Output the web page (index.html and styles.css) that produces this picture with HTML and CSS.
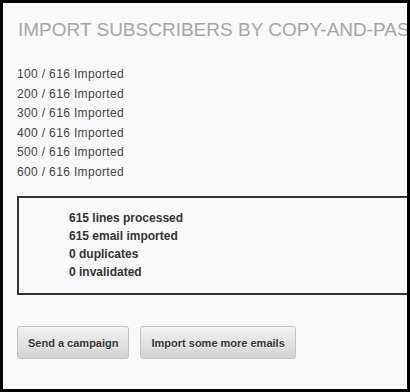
FILE: index.html
```html
<!DOCTYPE html>
<html lang="en">
<head>
    <meta charset="UTF-8">
    <title>Import subscribers</title>
    <link rel="stylesheet" href="styles.css">
</head>
<body>
    <div class="page">
        <h1>Import subscribers by copy-and-paste</h1>

        <div class="progress">
            <div>100 / 616 Imported</div>
            <div>200 / 616 Imported</div>
            <div>300 / 616 Imported</div>
            <div>400 / 616 Imported</div>
            <div>500 / 616 Imported</div>
            <div>600 / 616 Imported</div>
        </div>

        <div class="summary">
            <div>615 lines processed</div>
            <div>615 email imported</div>
            <div>0 duplicates</div>
            <div>0 invalidated</div>
        </div>

        <div class="actions">
            <button class="button">Send a campaign</button>
            <button class="button">Import some more emails</button>
        </div>
    </div>
</body>
</html>
```

FILE: styles.css
```css
html, body {
    margin: 0;
    background: #000;
}
body {
    padding: 3px;
    font-family: "Liberation Sans", Arial, sans-serif;
}
.page {
    width: 390px;
    height: 370px;
    padding: 16px 0 0 14px;
    background: #f9f9f9;
    overflow: hidden;
}
h1 {
    margin: 0 0 24px 1px;
    font-size: 19px;
    line-height: 22px;
    font-weight: normal;
    text-transform: uppercase;
    white-space: nowrap;
    color: #a6a6a6;
}
.progress {
    font-size: 12px;
    line-height: 19.5px;
    letter-spacing: 0.35px;
    color: #444;
}
.summary {
    width: 420px;
    margin-top: 14px;
    padding: 11px 0 12px 50px;
    border: 2px solid #333;
    font-size: 12px;
    line-height: 18px;
    font-weight: bold;
    color: #333;
}
.actions {
    display: flex;
    gap: 11px;
    margin-top: 31px;
}
.button {
    height: 33px;
    padding: 0 10px;
    border: 1px solid #c2c2c2;
    border-radius: 3px;
    background: linear-gradient(#f3f3f3, #d2d2d2);
    font-family: "Liberation Sans", Arial, sans-serif;
    font-size: 11px;
    font-weight: bold;
    color: #333;
    text-shadow: 0 1px 0 #fff;
    cursor: pointer;
}
.button:hover {
    background: linear-gradient(#f8f8f8, #dadada);
}
```
